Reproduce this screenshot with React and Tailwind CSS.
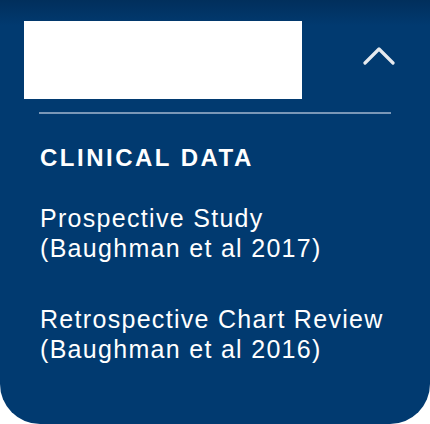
export default function App() {
  const items = [
    ['Prospective Study', '(Baughman et al 2017)'],
    ['Retrospective Chart Review', '(Baughman et al 2016)'],
  ];

  return (
    <div className="h-[424px] w-[430px] overflow-hidden rounded-b-[40px] bg-gradient-to-b from-[#012f5c] via-[#013a70] via-[6%] to-[#013a70] font-['Liberation_Sans',Arial,sans-serif] text-white">
      {/* Header */}
      <div className="flex items-start justify-between pl-[24px] pr-[35px] pt-[21px]">
        <div className="h-[78px] w-[278px] bg-white" />
        <svg width="32" height="19" viewBox="0 0 32 19" className="mt-[25px]" fill="none">
          <path d="M2 17 L16 3 L30 17" stroke="#e6eaef" strokeWidth="3.2" strokeLinecap="round" strokeLinejoin="round" />
        </svg>
      </div>

      <div className="ml-[39px] mr-[39px] mt-[13px] h-[2px] bg-[#7a97b7]" />

      {/* Menu */}
      <div className="pl-[40px]">
        <h2 className="mt-[30px] text-[24px] font-bold leading-[28px] tracking-[2.5px]">CLINICAL DATA</h2>
        <ul className="mt-[31px] flex flex-col gap-[41px]">
          {items.map(([a, b]) => (
            <li key={a} className="text-[25px] leading-[30px] tracking-[1.3px]">
              <a href="#">
                {a}
                <br />
                {b}
              </a>
            </li>
          ))}
        </ul>
      </div>
    </div>
  );
}
